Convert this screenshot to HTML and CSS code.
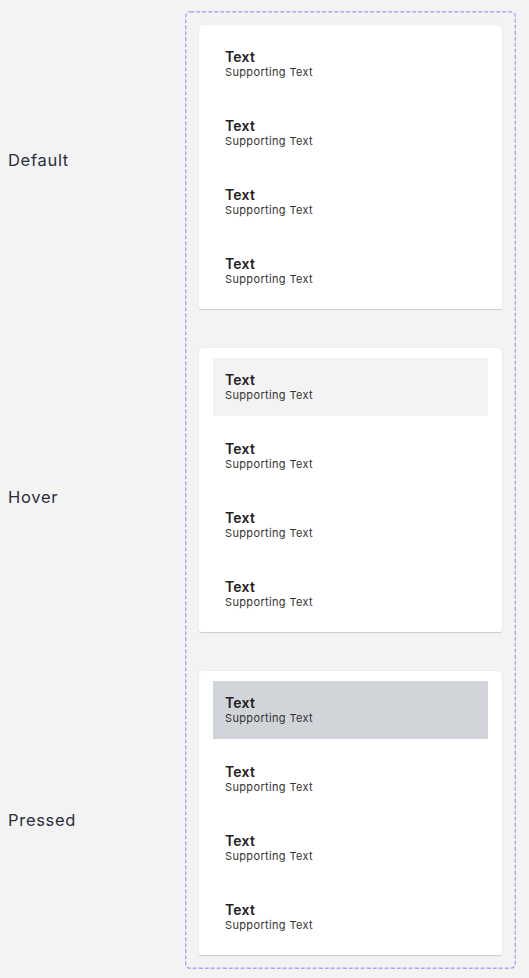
FILE: index.html
```html
<!DOCTYPE html>
<html>
<head>
<meta charset="utf-8">
<link rel="stylesheet" href="styles.css">
</head>
<body>
<div class="page">
  <div class="labels">
    <div class="label label-default">Default</div>
    <div class="label label-hover">Hover</div>
    <div class="label label-pressed">Pressed</div>
  </div>
  <div class="frame">
    <div class="card">
      <div class="item"><div class="title">Text</div><div class="sub">Supporting Text</div></div>
      <div class="item"><div class="title">Text</div><div class="sub">Supporting Text</div></div>
      <div class="item"><div class="title">Text</div><div class="sub">Supporting Text</div></div>
      <div class="item"><div class="title">Text</div><div class="sub">Supporting Text</div></div>
    </div>
    <div class="card">
      <div class="item item-hover"><div class="title">Text</div><div class="sub">Supporting Text</div></div>
      <div class="item"><div class="title">Text</div><div class="sub">Supporting Text</div></div>
      <div class="item"><div class="title">Text</div><div class="sub">Supporting Text</div></div>
      <div class="item"><div class="title">Text</div><div class="sub">Supporting Text</div></div>
    </div>
    <div class="card">
      <div class="item item-pressed"><div class="title">Text</div><div class="sub">Supporting Text</div></div>
      <div class="item"><div class="title">Text</div><div class="sub">Supporting Text</div></div>
      <div class="item"><div class="title">Text</div><div class="sub">Supporting Text</div></div>
      <div class="item"><div class="title">Text</div><div class="sub">Supporting Text</div></div>
    </div>
  </div>
</div>
</body>
</html>
```
FILE: styles.css
```css
html, body {
  margin: 0;
  padding: 0;
  background: #f3f3f3;
}
body {
  font-family: Inter, "Noto Sans", sans-serif;
  width: 529px;
  height: 978px;
  overflow: hidden;
}
.page {
  display: flex;
  padding-top: 11px;
}
.labels {
  width: 185px;
  display: flex;
  flex-direction: column;
}
.label {
  padding-left: 8px;
  font-size: 16.5px;
  letter-spacing: 0.7px;
  color: #2a2e3b;
  height: 20px;
  line-height: 20px;
}
.label-default { margin-top: 139px; }
.label-hover { margin-top: 317px; }
.label-pressed { margin-top: 303px; }
.frame {
  width: 331px;
  height: 958px;
  box-sizing: border-box;
  padding: 14px;
  display: flex;
  flex-direction: column;
  gap: 39px;
  background-image: url("data:image/svg+xml;utf8,%3Csvg xmlns='http://www.w3.org/2000/svg' width='331' height='958'%3E%3Crect x='0.7' y='0.7' width='329.6' height='956.6' rx='4.5' fill='none' stroke='%23b2a3fa' stroke-width='1.4' stroke-dasharray='4 2'/%3E%3C/svg%3E");
  background-repeat: no-repeat;
}
.card {
  width: 303px;
  height: 284px;
  box-sizing: border-box;
  background: #fff;
  border-radius: 5px 5px 2px 2px;
  box-shadow: 0 1px 1px rgba(60, 80, 100, 0.22), 0 0 3px rgba(0, 0, 0, 0.04);
  padding: 10px 14px 9px;
  display: flex;
  flex-direction: column;
  gap: 11px;
}
.item {
  height: 58px;
  box-sizing: border-box;
  padding: 0 12px;
  display: flex;
  flex-direction: column;
  justify-content: center;
}
.item-hover { background: #f3f3f3; }
.item-pressed { background: #d1d4d8; }
.title {
  font-size: 14px;
  font-weight: 600;
  color: #222;
  line-height: 16px;
  letter-spacing: 0.2px;
}
.sub {
  font-size: 11px;
  letter-spacing: 0.35px;
  color: #333;
  line-height: 15px;
}
```
